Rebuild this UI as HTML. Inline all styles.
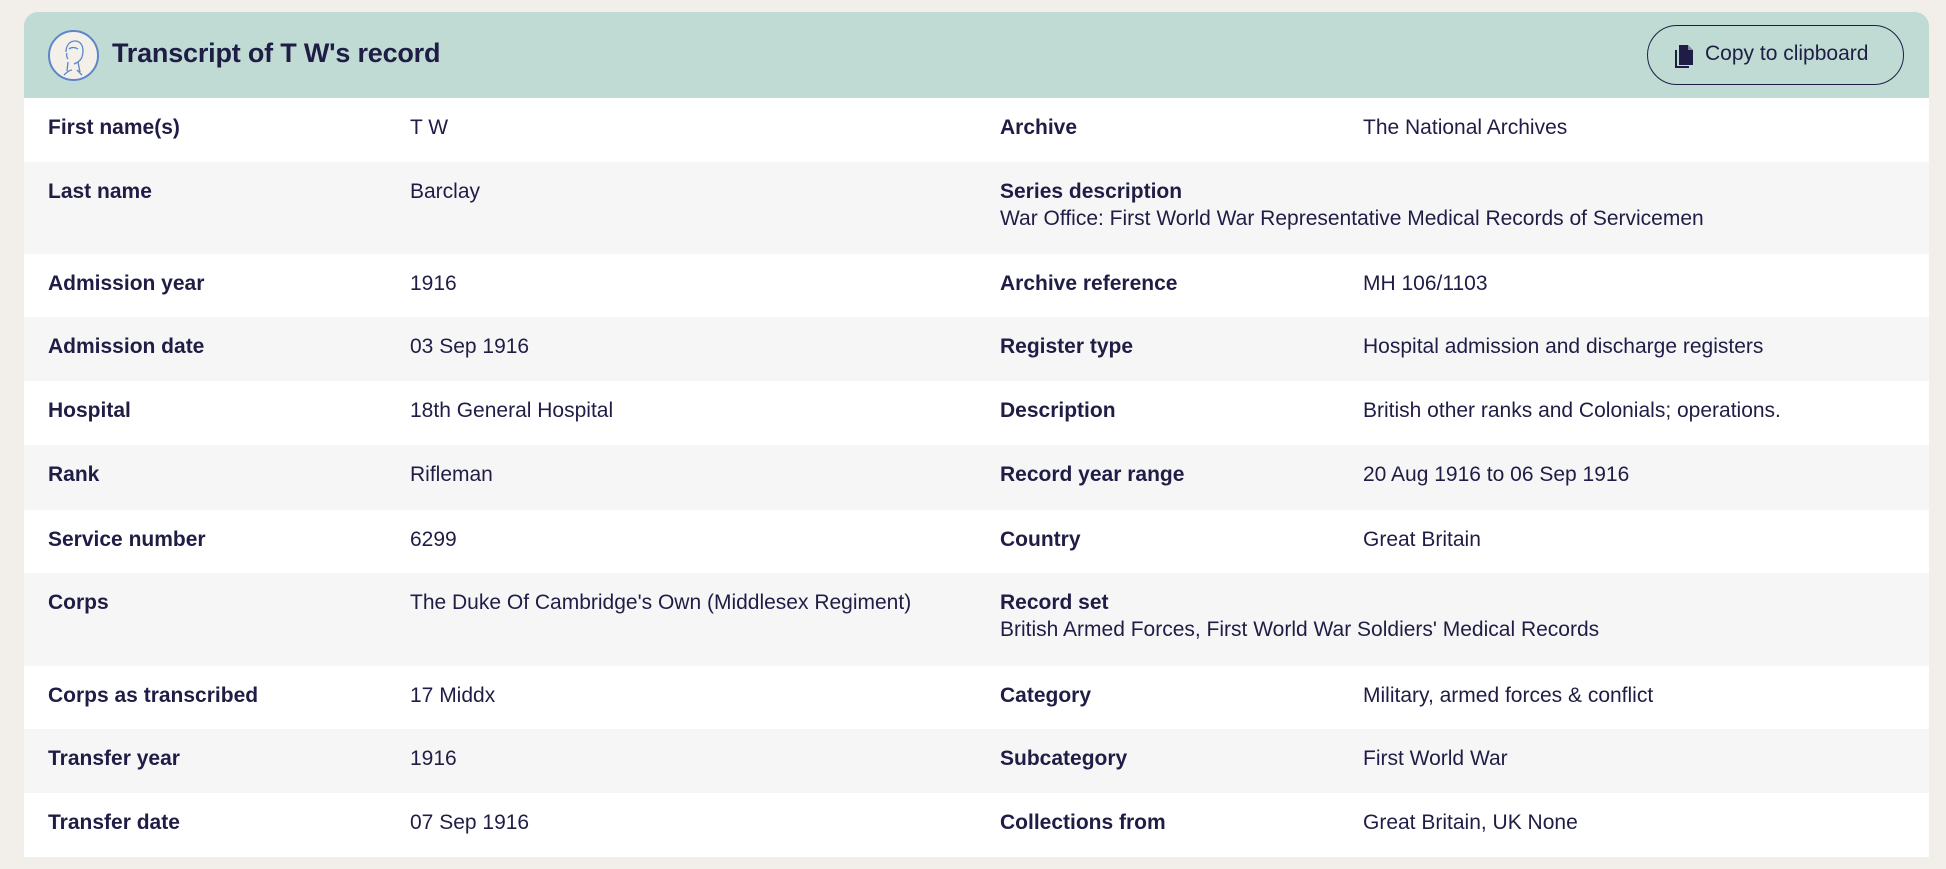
<!DOCTYPE html>
<html><head><meta charset="utf-8"><style>
*{margin:0;padding:0;box-sizing:border-box}
body{width:1946px;height:869px;background:#f2efeb;font-family:"Liberation Sans",sans-serif;color:#1f1d45;overflow:hidden;position:relative}
.card{position:absolute;left:24px;top:12px;width:1905px;height:845px;background:#fff;border-radius:14px 14px 0 0;overflow:hidden}
.hd{height:86px;background:#bfdbd4;position:relative}
.hd h1{position:absolute;left:88px;top:26px;font-size:27px;font-weight:bold;letter-spacing:-0.2px}
.ic{position:absolute;left:24px;top:18px;width:51px;height:51px;border:2px solid #5c86c9;border-radius:50%;background:#f3efe9}
.btn{position:absolute;left:1623px;top:13px;width:257px;height:60px;border:1.5px solid #1f1d45;border-radius:30px;font-size:21px;padding:16px 0 0 57px}
.btn svg{position:absolute;left:27px;top:19px}
.row{position:relative;font-size:21px;line-height:27px}
.row div{position:absolute;top:16px}
.l{font-weight:bold}
.a{left:24px}.b{left:386px}.c{left:976px}.d{left:1339px}
</style></head><body>
<div class="card">
<div class="hd">
<div class="ic"><svg width="47" height="47" viewBox="0 0 47 47"><g fill="none" stroke="#5c86c9" stroke-width="1.3"><path d="M16 20c0-7 4-11 9-11s8 4 8 10c0 5-2 9-5 11l-4 2"/><path d="M19 17c2-2 6-2 9 0"/><path d="M18 30l-1 9M28 30l2 10M14 43c3-3 6-5 8-5M32 43c-2-2-4-4-5-5"/><path d="M17 21c-1 2 0 5 1 6"/></g></svg></div>
<h1>Transcript of T W's record</h1>
<div class="btn"><svg width="19" height="23" viewBox="0 0 19 23"><path d="M2 5v16h12v2H0V5z" fill="#1f1d45"/><path d="M4 0h9l5 5v15H4z" fill="#1f1d45"/><path d="M13 0v5h5" fill="#bfdbd4" opacity=".6"/></svg>Copy to clipboard</div>
</div>
<div class="rows">
<div class="row" style="height:64px;background:#fff"><div class="l a">First name(s)</div><div class="b">T W</div><div class="l c">Archive</div><div class="d">The National Archives</div></div>
<div class="row" style="height:92px;background:#f6f6f6"><div class="l a">Last name</div><div class="b">Barclay</div><div class="c"><b>Series description</b><br>War Office: First World War Representative Medical Records of Servicemen</div></div>
<div class="row" style="height:63px;background:#fff"><div class="l a">Admission year</div><div class="b">1916</div><div class="l c">Archive reference</div><div class="d">MH 106/1103</div></div>
<div class="row" style="height:64px;background:#f6f6f6"><div class="l a">Admission date</div><div class="b">03 Sep 1916</div><div class="l c">Register type</div><div class="d">Hospital admission and discharge registers</div></div>
<div class="row" style="height:64px;background:#fff"><div class="l a">Hospital</div><div class="b">18th General Hospital</div><div class="l c">Description</div><div class="d">British other ranks and Colonials; operations.</div></div>
<div class="row" style="height:65px;background:#f6f6f6"><div class="l a">Rank</div><div class="b">Rifleman</div><div class="l c">Record year range</div><div class="d">20 Aug 1916 to 06 Sep 1916</div></div>
<div class="row" style="height:63px;background:#fff"><div class="l a">Service number</div><div class="b">6299</div><div class="l c">Country</div><div class="d">Great Britain</div></div>
<div class="row" style="height:93px;background:#f6f6f6"><div class="l a">Corps</div><div class="b">The Duke Of Cambridge's Own (Middlesex Regiment)</div><div class="c"><b>Record set</b><br>British Armed Forces, First World War Soldiers' Medical Records</div></div>
<div class="row" style="height:63px;background:#fff"><div class="l a">Corps as transcribed</div><div class="b">17 Middx</div><div class="l c">Category</div><div class="d">Military, armed forces &amp; conflict</div></div>
<div class="row" style="height:64px;background:#f6f6f6"><div class="l a">Transfer year</div><div class="b">1916</div><div class="l c">Subcategory</div><div class="d">First World War</div></div>
<div class="row" style="height:64px;background:#fff"><div class="l a">Transfer date</div><div class="b">07 Sep 1916</div><div class="l c">Collections from</div><div class="d">Great Britain, UK None</div></div>
</div>
</div>
</body></html>
